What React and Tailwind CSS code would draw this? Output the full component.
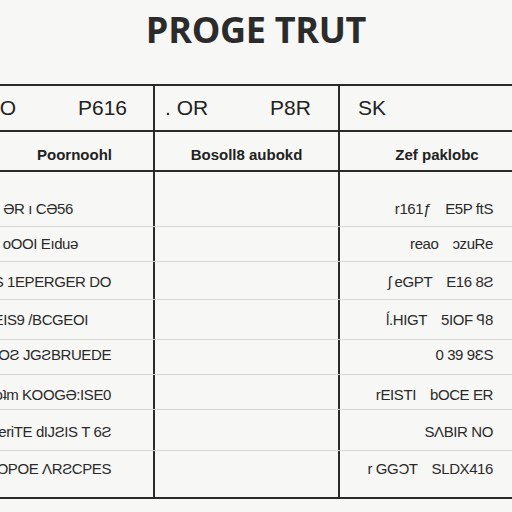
export default function App() {
  const rows = [
    { h: "h-[55px] pt-[26px]", pr: "pr-[80px]", left: "ƏR ı CƏ56", a: "r161ƒ", b: "E5P ftS" },
    { h: "h-[35px] pt-[6px]", pr: "pr-[75px]", left: "oOOI Eıduə", a: "reao", b: "ɔzuRe" },
    { h: "h-[38px] pt-[9px]", pr: "pr-[42px]", left: "GES 1EPERGER DO", a: "ʃ eGPT", b: "E16 8Ƨ" },
    { h: "h-[40px] pt-[9px]", pr: "pr-[65px]", left: "EIS9 /BCGEOI", a: "ĺ.HIGT", b: "5IOF ꟼ8" },
    { h: "h-[35px] pt-[4px]", pr: "pr-[42px]", left: "ƧEOƧ JGƧBRUEDE", a: "", b: "0 39 9ƐS" },
    { h: "h-[35px] pt-[9px]", pr: "pr-[42px]", left: "oʇm KOOGƏ:ISE0", a: "rEISTI", b: "bOCE ER" },
    { h: "h-[41px] pt-[11px]", pr: "pr-[42px]", left: "eriTE dIJƧIS T 6Ƨ", a: "", b: "SɅBIR NO" },
    { h: "h-[48px] pt-[7px]", pr: "pr-[42px]", left: "ƆPOE ɅRƧCPES", a: "r GGƆT", b: "SLDX416", last: true },
  ];

  return (
    <div
      className="w-[512px] h-[512px] overflow-hidden bg-[#f7f7f5] text-[#262626]"
      style={{ fontFamily: "'Liberation Sans', Arial, sans-serif" }}
    >
      {/* Title */}
      <div className="h-[84px] pt-[12px] flex justify-center">
        <h1
          className="text-[36px] leading-[36px] font-bold tracking-[-0.3px] text-[#2b2b2b]"
          style={{ fontFamily: "'Open Sans', 'Liberation Sans', sans-serif" }}
        >
          PROGE TRUT
        </h1>
      </div>

      {/* Table */}
      <div className="border-t-2 border-[#2a2a2a]">
        <div className="flex h-[46px] border-b-2 border-[#2a2a2a] text-[21px] text-[#222]">
          <div className="w-[155px] border-r-2 border-[#2a2a2a] flex items-center">
            <span className="-ml-[6px] w-[84px]">IO</span>
            <span>P616</span>
          </div>
          <div className="w-[185px] border-r-2 border-[#2a2a2a] flex items-center pl-[10px]">
            <span className="w-[105px]">. OR</span>
            <span>P8R</span>
          </div>
          <div className="flex-1 flex items-center pl-[18px]">SK</div>
        </div>

        <div className="flex h-[40px] border-b-2 border-[#2a2a2a] text-[15px] font-bold text-[#222]">
          <div className="w-[155px] border-r-2 border-[#2a2a2a] flex justify-center pt-[12px] pr-[4px]">
            Poornoohl
          </div>
          <div className="w-[185px] border-r-2 border-[#2a2a2a] flex justify-center pt-[12px]">
            Bosoll8 aubokd
          </div>
          <div className="flex-1 flex justify-center pt-[12px] pl-[22px]">
            Zef paklobc
          </div>
        </div>

        {rows.map((r, i) => (
          <div
            key={i}
            className={`flex ${r.h.split(" ")[0]} ${
              r.last ? "border-b-2 border-[#2a2a2a]" : "border-b border-[#d6d6d4]"
            } text-[15px] tracking-[-0.4px] text-[#2a2a2a]`}
          >
            <div
              className={`w-[155px] border-r-2 border-[#2a2a2a] flex justify-end whitespace-nowrap overflow-hidden ${r.h.split(" ")[1]} ${r.pr}`}
            >
              <span className="shrink-0">{r.left}</span>
            </div>
            <div className="w-[185px] border-r-2 border-[#2a2a2a]" />
            <div
              className={`flex-1 flex justify-end pr-[19px] gap-[14px] whitespace-nowrap ${r.h.split(" ")[1]}`}
            >
              {r.a && <span>{r.a}</span>}
              <span>{r.b}</span>
            </div>
          </div>
        ))}
      </div>
    </div>
  );
}
